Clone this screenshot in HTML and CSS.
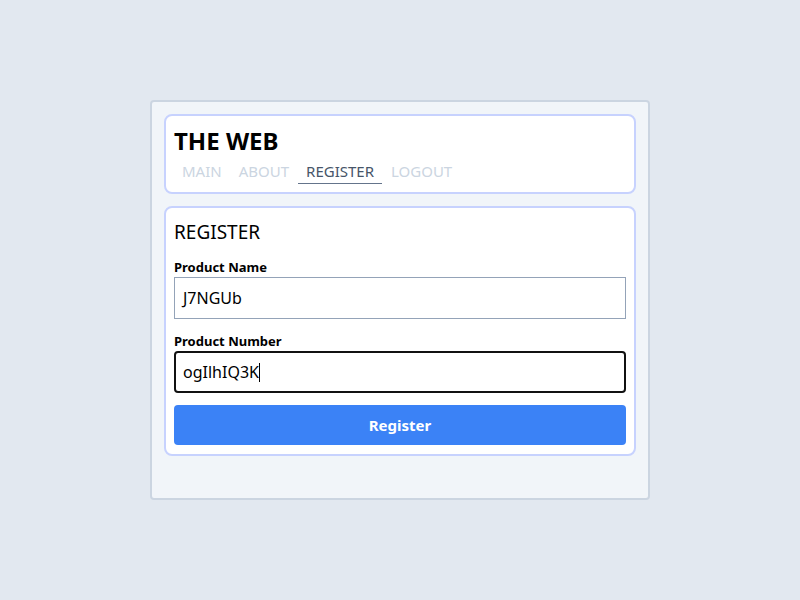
FILE: index.html
```html
<!DOCTYPE html>
<html>
<head>
<meta charset="utf-8">
<link rel="stylesheet" href="styles.css">
</head>
<body>
<div class="app">
  <header class="card header">
    <h1 class="title">THE WEB</h1>
    <nav class="nav">
      <a class="nav-item">MAIN</a>
      <a class="nav-item">ABOUT</a>
      <a class="nav-item active">REGISTER</a>
      <a class="nav-item">LOGOUT</a>
    </nav>
  </header>
  <section class="card form-card">
    <h2 class="form-title">REGISTER</h2>
    <label class="label">Product Name</label>
    <div class="input">J7NGUb</div>
    <label class="label label-second">Product Number</label>
    <div class="input focused">ogIlhIQ3K<span class="caret"></span></div>
    <button class="btn">Register</button>
  </section>
</div>
</body>
</html>
```
FILE: styles.css
```css
* { box-sizing: border-box; }
html, body { margin: 0; height: 100%; }
body {
  background: #e2e8f0;
  display: flex;
  align-items: center;
  justify-content: center;
  font-family: "Noto Sans", "Open Sans", sans-serif;
  color: #000;
}
.app {
  width: 500px;
  height: 400px;
  background: #f1f5f9;
  border: 2px solid #cbd5e1;
  border-radius: 4px;
  padding: 12px;
  display: flex;
  flex-direction: column;
  gap: 12px;
}
.card {
  background: #fff;
  border: 2px solid #c7d2fe;
  border-radius: 8px;
  padding: 8px;
}
.header { height: 80px; padding-top: 10px; }
.title {
  margin: 0;
  font-size: 24px;
  font-weight: 700;
  line-height: 30px;
}
.nav { display: flex; gap: 1px; margin-top: 3px; }
.nav-item {
  padding: 0 8px;
  font-size: 15px;
  line-height: 24px;
  color: #cbd5e1;
  border-bottom: 1px solid transparent;
}
.nav-item.active { color: #475569; border-bottom-color: #64748b; }
.form-card { display: flex; flex-direction: column; padding-bottom: 9px; }
.form-title {
  margin: 0;
  font-size: 19px;
  font-weight: 400;
  line-height: 28px;
  margin-top: 2px;
}
.label {
  font-size: 13px;
  font-weight: 700;
  line-height: 19px;
  margin-top: 12px;
}
.label-second { margin-top: 13px; }
.input {
  height: 42px;
  border: 1px solid #94a3b8;
  padding: 0 8px;
  font-size: 16px;
  display: flex;
  align-items: center;
}
.input.focused { border: 2px solid #111; border-radius: 4px; padding: 0 7px; }
.caret { width: 1px; height: 19px; background: #000; }
.btn {
  margin-top: 12px;
  height: 40px;
  border: 0;
  border-radius: 4px;
  background: #3b82f6;
  color: #fff;
  font-family: inherit;
  font-size: 15px;
  font-weight: 700;
}
```
